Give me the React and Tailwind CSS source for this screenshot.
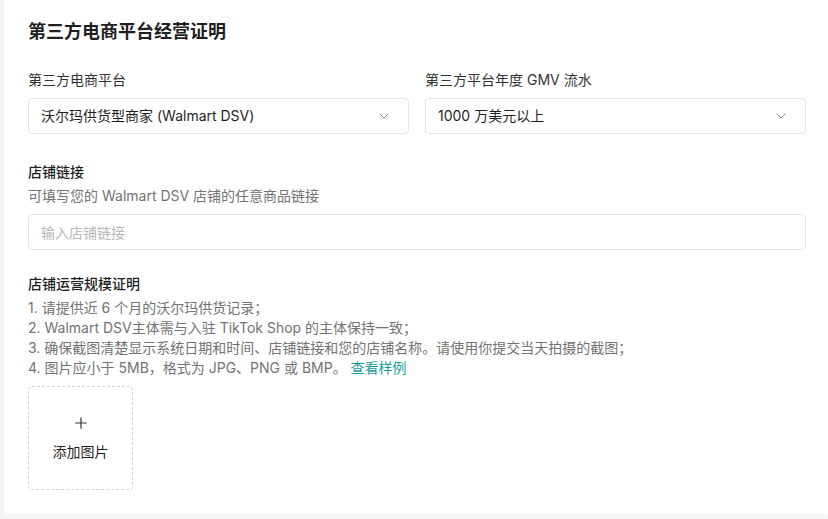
import React from 'react';
import { ChevronDown, Plus } from 'lucide-react';

const font = { fontFamily: '"Inter", "Noto Sans CJK SC", sans-serif' };

function Select({ value }) {
  return (
    <div className="flex h-9 items-center justify-between rounded border border-[#e3e3e3] bg-white pl-3 pr-4 text-sm text-[#1f1f1f]">
      <span>{value}</span>
      <ChevronDown className="h-4 w-4 text-[#8a8a8a]" strokeWidth={1.5} />
    </div>
  );
}

const rules = [
  '1. 请提供近 6 个月的沃尔玛供货记录；',
  '2. Walmart DSV主体需与入驻 TikTok Shop 的主体保持一致；',
  '3. 确保截图清楚显示系统日期和时间、店铺链接和您的店铺名称。请使用你提交当天拍摄的截图；',
];

export default function App() {
  return (
    <div className="min-h-[519px] bg-[#f5f5f5] pl-1 pb-1" style={font}>
      <div className="rounded-b bg-white pl-6 pr-[22px] pt-[19px] pb-6">
        <h1 className="text-lg leading-[26px] font-semibold text-[#1f1f1f]">第三方电商平台经营证明</h1>

        <div className="mt-[25px] grid grid-cols-2 gap-4">
          <div>
            <div className="text-sm leading-5 text-[#333]">第三方电商平台</div>
            <div className="mt-2">
              <Select value="沃尔玛供货型商家 (Walmart DSV)" />
            </div>
          </div>
          <div>
            <div className="text-sm leading-5 text-[#333]">第三方平台年度 GMV 流水</div>
            <div className="mt-2">
              <Select value="1000 万美元以上" />
            </div>
          </div>
        </div>

        <div className="mt-7">
          <div className="text-sm leading-5 font-medium text-[#1f1f1f]">店铺链接</div>
          <div className="mt-1 text-sm leading-5 text-[#737373]">可填写您的 Walmart DSV 店铺的任意商品链接</div>
          <input
            className="mt-2 h-9 w-full rounded border border-[#e3e3e3] px-3 text-sm text-[#1f1f1f] outline-none placeholder:text-[#b8b8b8]"
            placeholder="输入店铺链接"
          />
        </div>

        <div className="mt-6">
          <div className="text-sm leading-5 font-medium text-[#1f1f1f]">店铺运营规模证明</div>
          <div className="mt-1 text-sm leading-5 text-[#737373]">
            {rules.map((r) => (
              <div key={r}>{r}</div>
            ))}
            <div>
              4. 图片应小于 5MB，格式为 JPG、PNG 或 BMP。 <span className="text-[#16a09a]">查看样例</span>
            </div>
          </div>
          <div className="mt-2 flex h-[104px] w-[105px] flex-col items-center justify-center rounded border border-dashed border-[#d4d4d4]">
            <Plus className="h-[18px] w-[18px] text-[#333]" strokeWidth={1.6} />
            <span className="mt-2.5 text-sm leading-5 text-[#1f1f1f]">添加图片</span>
          </div>
        </div>
      </div>
    </div>
  );
}
